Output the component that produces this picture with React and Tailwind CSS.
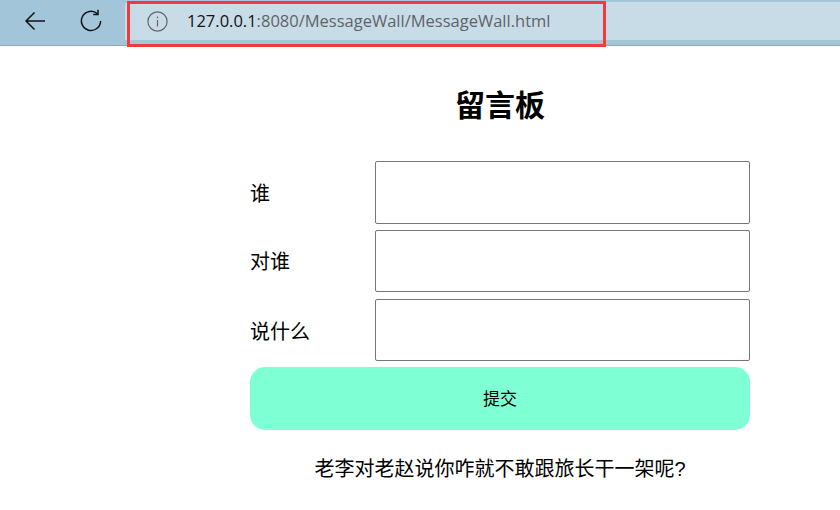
import React from 'react'

const cjk = 'font-["Liberation_Sans","Noto_Sans_CJK_SC",sans-serif]'

const Row = ({ label, boxClass, labelClass }) => (
    <div className="flex items-start">
        <div className={`w-[125px] text-[20px] leading-[30px] text-black ${labelClass}`}>{label}</div>
        <div className={`w-[375px] border border-[#767676] rounded-[2px] bg-white ${boxClass}`}></div>
    </div>
)

const App = () => {
    return (
        <div className={`w-[840px] h-[510px] bg-white overflow-hidden ${cjk}`}>
            {/* browser toolbar */}
            <div className="relative h-[46px] bg-[#a3c5da] border-b border-[#8fa9ba] flex items-start">
                <div className="w-[125px] h-[42px] flex items-center shrink-0">
                    <svg className="ml-[24px]" width="22" height="22" viewBox="0 0 22 22" fill="none" stroke="#111" strokeWidth="1.5">
                        <path d="M21 11H2M10.5 2.5L2 11l8.5 8.5" />
                    </svg>
                    <svg className="ml-[33px]" width="24" height="24" viewBox="0 0 24 24" fill="none" stroke="#111" strokeWidth="1.5">
                        <path d="M18.5 4.8A9.6 9.6 0 1 0 21.6 12" />
                        <path d="M19 0.8V5.6H14.2" />
                    </svg>
                </div>
                <div className="flex-1 h-[38px] mt-[2px] bg-[#c8dce8] rounded-tl-[4px] flex items-center">
                    <svg className="ml-[22px] shrink-0" width="21" height="21" viewBox="0 0 21 21" fill="none" stroke="#666" strokeWidth="1.2">
                        <circle cx="10.5" cy="10.5" r="9.6" />
                        <path d="M10.5 9v6.5M10.5 5.6v1.6" />
                    </svg>
                    <div className="ml-[19px] text-[16.5px] text-[#5f6368] font-['Open_Sans',sans-serif] whitespace-nowrap">
                        <span className="text-[#111]">127.0.0.1</span>:8080/MessageWall/MessageWall.html
                    </div>
                </div>
                {/* red highlight drawn over the screenshot */}
                <div className="absolute left-[127px] top-[1px] w-[479px] h-[46px] border-[3px] border-[#f03a3e] pointer-events-none"></div>
            </div>

            {/* message form */}
            <div className="w-[500px] ml-[250px]">
                <h1 className="mt-[37px] text-[30px] leading-[46px] font-bold text-center text-black">留言板</h1>
                <div className="mt-[32px] flex flex-col">
                    <Row label="谁" boxClass="h-[63px]" labelClass="mt-[18px]" />
                    <div className="mt-[6px]"><Row label="对谁" boxClass="h-[62px]" labelClass="mt-[17px]" /></div>
                    <div className="mt-[7px]"><Row label="说什么" boxClass="h-[62px]" labelClass="mt-[18px]" /></div>
                </div>
                <div className="mt-[6px] h-[63px] pt-[2px] rounded-[15px] bg-[#7fffd4] flex items-center justify-center text-[17px] text-black">提交</div>
                <div className="mt-[24px] text-[20px] leading-[30px] text-center text-black">老李对老赵说你咋就不敢跟旅长干一架呢?</div>
            </div>
        </div>
    )
}

export default App
